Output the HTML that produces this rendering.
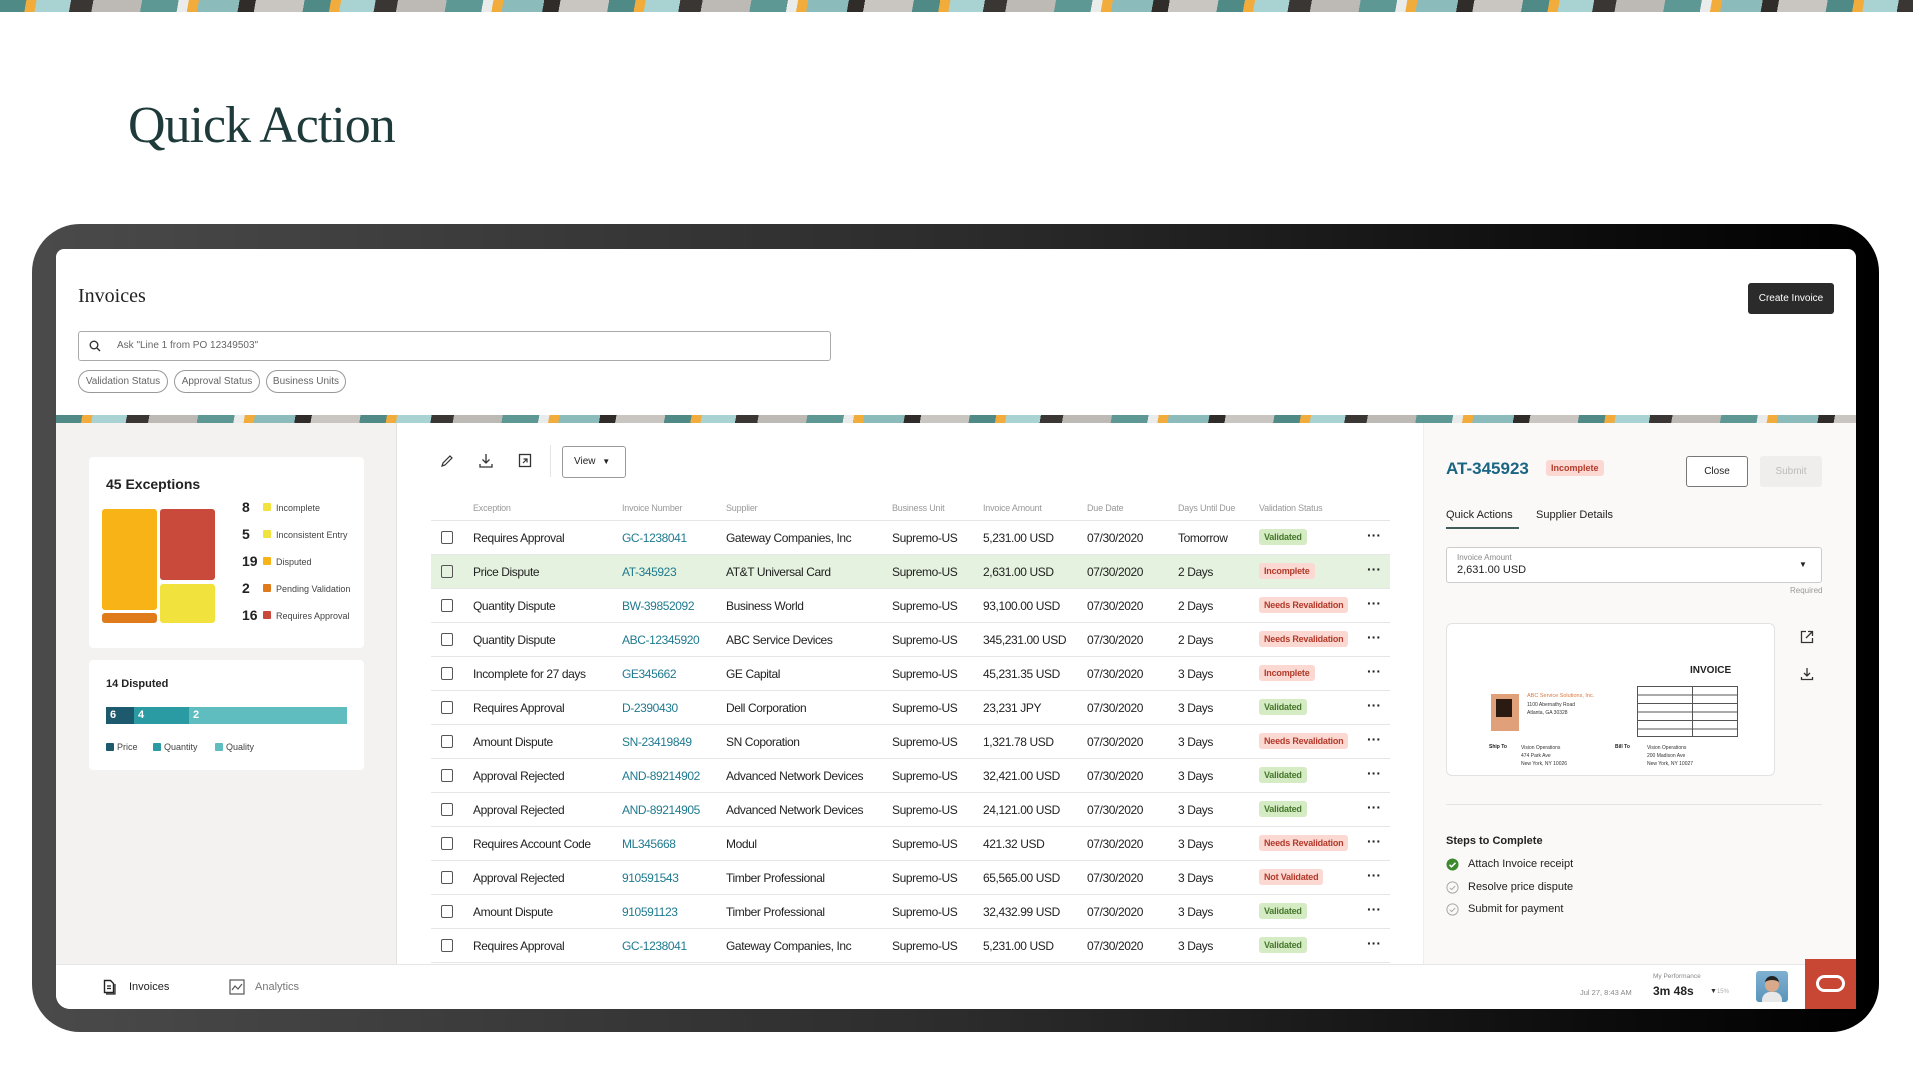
<!DOCTYPE html>
<html><head><meta charset="utf-8"><style>
*{margin:0;padding:0;box-sizing:border-box}
body{width:1913px;height:1077px;background:#fff;position:relative;overflow:hidden;font-family:"Liberation Sans",sans-serif;color:#222}
.a{position:absolute}
.strip{background:
 repeating-linear-gradient(100deg,#4f8a87 0 26px,#f2ac3c 26px 36px,#a9d2d3 36px 70px,#3a3633 70px 92px,#bdbab6 92px 140px,#5d9895 140px 176px,#e9eceb 176px 186px,#f2ac3c 186px 196px,#8bbcbb 196px 236px,#2f2c2a 236px 252px,#c9c6c1 252px 300px)}
.frame{left:32px;top:224px;width:1847px;height:808px;border-radius:48px;background:linear-gradient(90deg,#4a4a4a,#2c2c2c 50%,#0c0c0c 85%,#000)}
.screen{left:56px;top:249px;width:1800px;height:760px;background:#fff;border-radius:8px 8px 0 14px;overflow:hidden}
.chip{height:23px;border:1px solid #999;border-radius:12px;font-size:10px;color:#666;line-height:21px;text-align:center;top:121px}
.row{left:375px;width:959px;height:34px;border-bottom:1px solid #e6e6e6;font-size:12px;letter-spacing:-.4px}
.row span{position:absolute;top:10px;white-space:nowrap}
.cb{width:12px;height:13px;border:1.5px solid #555;border-radius:2px;left:10px;top:10px!important}
.lnk{color:#1f7a8f}
.b{font-size:9px;padding:3px 5px;border-radius:3px;top:8px!important;letter-spacing:-.2px;font-weight:bold}
.g{background:#d5ebc3;color:#46772c}
.r{background:#fbd8d2;color:#b23a2a}
.dots{font-weight:bold;font-size:14px;top:6px!important;letter-spacing:0}
.hd{font-size:9px;color:#999;letter-spacing:-.2px}
.lg{font-size:9px;color:#444}
.sw{width:8px;height:8px;border-radius:1px}
.num{font-size:14px;font-weight:bold}
</style></head><body>
<div class="a strip" style="left:0;top:0;width:1913px;height:12px"></div>
<div class="a" style="left:128px;top:96px;font-family:'Liberation Serif',serif;font-size:52px;color:#1f3a3a;letter-spacing:-1px">Quick Action</div>

<div class="a frame"></div>
<div class="a screen">
 <div class="a" style="left:22px;top:36px;font-family:'Liberation Serif',serif;font-size:20px;color:#222">Invoices</div>
 <div class="a" style="left:1692px;top:34px;width:86px;height:31px;background:#2b2b2b;border-radius:3px;color:#fff;font-size:10px;line-height:31px;text-align:center">Create Invoice</div>
 <div class="a" style="left:22px;top:82px;width:753px;height:30px;border:1.5px solid #aaa;border-radius:3px">
  <svg class="a" style="left:10px;top:8px" width="12" height="12" viewBox="0 0 12 12"><circle cx="5" cy="5" r="3.8" fill="none" stroke="#333" stroke-width="1.4"/><path d="M8 8l3 3" stroke="#333" stroke-width="1.4"/></svg>
  <div class="a" style="left:38px;top:8px;font-size:10px;color:#666">Ask "Line 1 from PO 12349503"</div>
 </div>
 <div class="a chip" style="left:22px;width:90px">Validation Status</div>
 <div class="a chip" style="left:118px;width:86px">Approval Status</div>
 <div class="a chip" style="left:210px;width:80px">Business Units</div>
 <div class="a strip" style="left:0;top:166px;width:1800px;height:8px"></div>

 <div class="a" style="left:0;top:174px;width:341px;height:541px;background:#f3f2f0;border-right:1px solid #e4e2de"></div>
 <div class="a" style="left:33px;top:208px;width:275px;height:191px;background:#fff;border-radius:4px"></div>
 <div class="a" style="left:50px;top:227px;font-size:14px;font-weight:bold">45 Exceptions</div>
 <div class="a" style="left:46px;top:260px;width:55px;height:101px;background:#f8b316;border-radius:3px"></div>
 <div class="a" style="left:46px;top:364px;width:55px;height:10px;background:#e07b1c;border-radius:3px"></div>
 <div class="a" style="left:104px;top:260px;width:55px;height:71px;background:#c94a3a;border-radius:3px"></div>
 <div class="a" style="left:104px;top:335px;width:55px;height:39px;background:#f1e23e;border-radius:3px"></div>
 <div class="a num" style="left:186px;top:250px">8</div><div class="a sw" style="left:207px;top:254px;background:#f1e23e"></div><div class="a lg" style="left:220px;top:254px">Incomplete</div>
 <div class="a num" style="left:186px;top:277px">5</div><div class="a sw" style="left:207px;top:281px;background:#f1e23e"></div><div class="a lg" style="left:220px;top:281px">Inconsistent Entry</div>
 <div class="a num" style="left:186px;top:304px">19</div><div class="a sw" style="left:207px;top:308px;background:#f8b316"></div><div class="a lg" style="left:220px;top:308px">Disputed</div>
 <div class="a num" style="left:186px;top:331px">2</div><div class="a sw" style="left:207px;top:335px;background:#e07b1c"></div><div class="a lg" style="left:220px;top:335px">Pending Validation</div>
 <div class="a num" style="left:186px;top:358px">16</div><div class="a sw" style="left:207px;top:362px;background:#c94a3a"></div><div class="a lg" style="left:220px;top:362px">Requires Approval</div>

 <div class="a" style="left:33px;top:411px;width:275px;height:110px;background:#fff;border-radius:4px"></div>
 <div class="a" style="left:50px;top:429px;font-size:11px;font-weight:bold">14 Disputed</div>
 <div class="a" style="left:50px;top:458px;width:28px;height:17px;background:#1e5a6e;color:#fff;font-size:11px;font-weight:bold;padding:2px 4px">6</div>
 <div class="a" style="left:78px;top:458px;width:55px;height:17px;background:#2a9aa3;color:#fff;font-size:11px;font-weight:bold;padding:2px 4px">4</div>
 <div class="a" style="left:133px;top:458px;width:158px;height:17px;background:#5fbcbf;color:#fff;font-size:11px;font-weight:bold;padding:2px 4px">2</div>
 <div class="a sw" style="left:50px;top:494px;background:#1e5a6e"></div><div class="a lg" style="left:61px;top:493px">Price</div>
 <div class="a sw" style="left:97px;top:494px;background:#2a9aa3"></div><div class="a lg" style="left:108px;top:493px">Quantity</div>
 <div class="a sw" style="left:159px;top:494px;background:#5fbcbf"></div><div class="a lg" style="left:170px;top:493px">Quality</div>

 <svg class="a" style="left:384px;top:205px" width="14" height="14" viewBox="0 0 14 14"><path d="M2 12l1-3 7-7 2 2-7 7z" fill="none" stroke="#333" stroke-width="1.2"/></svg>
 <svg class="a" style="left:423px;top:204px" width="14" height="15" viewBox="0 0 14 15"><path d="M7 1v9M3.5 6.5L7 10l3.5-3.5M1 11v3h12v-3" fill="none" stroke="#333" stroke-width="1.3"/></svg>
 <svg class="a" style="left:462px;top:204px" width="14" height="15" viewBox="0 0 14 15"><rect x="1.5" y="1.5" width="11" height="12" fill="none" stroke="#333" stroke-width="1.3"/><path d="M5 10l4-4M5.5 6H9v3.5" fill="none" stroke="#333" stroke-width="1.2"/></svg>
 <div class="a" style="left:494px;top:196px;width:1px;height:32px;background:#e4e4e4"></div>
 <div class="a" style="left:506px;top:197px;width:64px;height:32px;border:1px solid #999;border-radius:3px;font-size:10px;line-height:30px;padding-left:11px">View <span style="font-size:8px;margin-left:4px">▼</span></div>

 <div class="a hd" style="left:417px;top:254px">Exception</div>
 <div class="a hd" style="left:566px;top:254px">Invoice Number</div>
 <div class="a hd" style="left:670px;top:254px">Supplier</div>
 <div class="a hd" style="left:836px;top:254px">Business Unit</div>
 <div class="a hd" style="left:927px;top:254px">Invoice Amount</div>
 <div class="a hd" style="left:1031px;top:254px">Due Date</div>
 <div class="a hd" style="left:1122px;top:254px">Days Until Due</div>
 <div class="a hd" style="left:1203px;top:254px">Validation Status</div>
 <div class="a" style="left:375px;top:271px;width:959px;height:1px;background:#e6e6e6"></div>

 <div class="a row" style="top:272px"><span class="cb"></span><span style="left:42px">Requires Approval</span><span class="lnk" style="left:191px">GC-1238041</span><span style="left:295px">Gateway Companies, Inc</span><span style="left:461px">Supremo-US</span><span style="left:552px">5,231.00 USD</span><span style="left:656px">07/30/2020</span><span style="left:747px">Tomorrow</span><span class="b g" style="left:828px">Validated</span><span class="dots" style="left:936px">···</span></div>
 <div class="a row" style="top:306px;background:#e5f2df"><span class="cb"></span><span style="left:42px">Price Dispute</span><span class="lnk" style="left:191px">AT-345923</span><span style="left:295px">AT&amp;T Universal Card</span><span style="left:461px">Supremo-US</span><span style="left:552px">2,631.00 USD</span><span style="left:656px">07/30/2020</span><span style="left:747px">2 Days</span><span class="b r" style="left:828px">Incomplete</span><span class="dots" style="left:936px">···</span></div>
 <div class="a row" style="top:340px"><span class="cb"></span><span style="left:42px">Quantity Dispute</span><span class="lnk" style="left:191px">BW-39852092</span><span style="left:295px">Business World</span><span style="left:461px">Supremo-US</span><span style="left:552px">93,100.00 USD</span><span style="left:656px">07/30/2020</span><span style="left:747px">2 Days</span><span class="b r" style="left:828px">Needs Revalidation</span><span class="dots" style="left:936px">···</span></div>
 <div class="a row" style="top:374px"><span class="cb"></span><span style="left:42px">Quantity Dispute</span><span class="lnk" style="left:191px">ABC-12345920</span><span style="left:295px">ABC Service Devices</span><span style="left:461px">Supremo-US</span><span style="left:552px">345,231.00 USD</span><span style="left:656px">07/30/2020</span><span style="left:747px">2 Days</span><span class="b r" style="left:828px">Needs Revalidation</span><span class="dots" style="left:936px">···</span></div>
 <div class="a row" style="top:408px"><span class="cb"></span><span style="left:42px">Incomplete for 27 days</span><span class="lnk" style="left:191px">GE345662</span><span style="left:295px">GE Capital</span><span style="left:461px">Supremo-US</span><span style="left:552px">45,231.35 USD</span><span style="left:656px">07/30/2020</span><span style="left:747px">3 Days</span><span class="b r" style="left:828px">Incomplete</span><span class="dots" style="left:936px">···</span></div>
 <div class="a row" style="top:442px"><span class="cb"></span><span style="left:42px">Requires Approval</span><span class="lnk" style="left:191px">D-2390430</span><span style="left:295px">Dell Corporation</span><span style="left:461px">Supremo-US</span><span style="left:552px">23,231 JPY</span><span style="left:656px">07/30/2020</span><span style="left:747px">3 Days</span><span class="b g" style="left:828px">Validated</span><span class="dots" style="left:936px">···</span></div>
 <div class="a row" style="top:476px"><span class="cb"></span><span style="left:42px">Amount Dispute</span><span class="lnk" style="left:191px">SN-23419849</span><span style="left:295px">SN Coporation</span><span style="left:461px">Supremo-US</span><span style="left:552px">1,321.78 USD</span><span style="left:656px">07/30/2020</span><span style="left:747px">3 Days</span><span class="b r" style="left:828px">Needs Revalidation</span><span class="dots" style="left:936px">···</span></div>
 <div class="a row" style="top:510px"><span class="cb"></span><span style="left:42px">Approval Rejected</span><span class="lnk" style="left:191px">AND-89214902</span><span style="left:295px">Advanced Network Devices</span><span style="left:461px">Supremo-US</span><span style="left:552px">32,421.00 USD</span><span style="left:656px">07/30/2020</span><span style="left:747px">3 Days</span><span class="b g" style="left:828px">Validated</span><span class="dots" style="left:936px">···</span></div>
 <div class="a row" style="top:544px"><span class="cb"></span><span style="left:42px">Approval Rejected</span><span class="lnk" style="left:191px">AND-89214905</span><span style="left:295px">Advanced Network Devices</span><span style="left:461px">Supremo-US</span><span style="left:552px">24,121.00 USD</span><span style="left:656px">07/30/2020</span><span style="left:747px">3 Days</span><span class="b g" style="left:828px">Validated</span><span class="dots" style="left:936px">···</span></div>
 <div class="a row" style="top:578px"><span class="cb"></span><span style="left:42px">Requires Account Code</span><span class="lnk" style="left:191px">ML345668</span><span style="left:295px">Modul</span><span style="left:461px">Supremo-US</span><span style="left:552px">421.32 USD</span><span style="left:656px">07/30/2020</span><span style="left:747px">3 Days</span><span class="b r" style="left:828px">Needs Revalidation</span><span class="dots" style="left:936px">···</span></div>
 <div class="a row" style="top:612px"><span class="cb"></span><span style="left:42px">Approval Rejected</span><span class="lnk" style="left:191px">910591543</span><span style="left:295px">Timber Professional</span><span style="left:461px">Supremo-US</span><span style="left:552px">65,565.00 USD</span><span style="left:656px">07/30/2020</span><span style="left:747px">3 Days</span><span class="b r" style="left:828px">Not Validated</span><span class="dots" style="left:936px">···</span></div>
 <div class="a row" style="top:646px"><span class="cb"></span><span style="left:42px">Amount Dispute</span><span class="lnk" style="left:191px">910591123</span><span style="left:295px">Timber Professional</span><span style="left:461px">Supremo-US</span><span style="left:552px">32,432.99 USD</span><span style="left:656px">07/30/2020</span><span style="left:747px">3 Days</span><span class="b g" style="left:828px">Validated</span><span class="dots" style="left:936px">···</span></div>
 <div class="a row" style="top:680px"><span class="cb"></span><span style="left:42px">Requires Approval</span><span class="lnk" style="left:191px">GC-1238041</span><span style="left:295px">Gateway Companies, Inc</span><span style="left:461px">Supremo-US</span><span style="left:552px">5,231.00 USD</span><span style="left:656px">07/30/2020</span><span style="left:747px">3 Days</span><span class="b g" style="left:828px">Validated</span><span class="dots" style="left:936px">···</span></div>

 <div class="a" style="left:1367px;top:174px;width:433px;height:541px;background:#faf9f8;border-left:1px solid #eee"></div>
 <div class="a" style="left:1390px;top:210px;font-size:17px;font-weight:bold;color:#1b6584">AT-345923</div>
 <div class="a" style="left:1490px;top:211px;background:#fbd8d2;color:#b23a2a;font-size:9px;padding:3px 5px;border-radius:3px;font-weight:bold">Incomplete</div>
 <div class="a" style="left:1630px;top:207px;width:62px;height:31px;border:1px solid #777;border-radius:3px;background:#fff;font-size:10px;line-height:29px;text-align:center">Close</div>
 <div class="a" style="left:1704px;top:207px;width:62px;height:31px;background:#efeeec;border-radius:3px;font-size:10px;line-height:31px;text-align:center;color:#bbb">Submit</div>
 <div class="a" style="left:1390px;top:260px;font-size:11px">Quick Actions</div>
 <div class="a" style="left:1390px;top:278px;width:73px;height:2px;background:#3f5c5a"></div>
 <div class="a" style="left:1480px;top:260px;font-size:11px">Supplier Details</div>
 <div class="a" style="left:1390px;top:298px;width:376px;height:36px;border:1px solid #ccc;border-radius:3px;background:#fff">
  <div class="a" style="left:10px;top:5px;font-size:8px;color:#888">Invoice Amount</div>
  <div class="a" style="left:10px;top:16px;font-size:11px">2,631.00 USD</div>
  <div class="a" style="left:352px;top:12px;font-size:8px">▼</div>
 </div>
 <div class="a" style="left:1734px;top:337px;font-size:8px;color:#999">Required</div>
 <div class="a" style="left:1390px;top:374px;width:329px;height:153px;border:1px solid #e2e2e2;border-radius:6px;background:#fff">
  <div class="a" style="left:243px;top:41px;font-size:10px;font-weight:bold">INVOICE</div>
  <div class="a" style="left:190px;top:62px;width:101px;height:51px;border:1px solid #555;background:repeating-linear-gradient(#fff 0 7.5px,#555 7.5px 8.5px)"></div>
  <div class="a" style="left:245px;top:62px;width:1px;height:51px;background:#555"></div>
  <div class="a" style="left:44px;top:70px;width:28px;height:37px;background:#e0a07a"><div class="a" style="left:5px;top:5px;width:16px;height:18px;background:#2a1a12"></div></div>
  <div class="a" style="left:80px;top:69px;font-size:5.5px;color:#d9773b">ABC Service Solutions, Inc.</div>
  <div class="a" style="left:80px;top:77px;font-size:5px;line-height:8px;color:#333">1100 Abernathy Road<br>Atlanta, GA 30328</div>
  <div class="a" style="left:42px;top:120px;font-size:5px;font-weight:bold">Ship To</div>
  <div class="a" style="left:74px;top:120px;font-size:5px;line-height:8px;color:#333">Vision Operations<br>474 Park Ave<br>New York, NY 10026</div>
  <div class="a" style="left:168px;top:120px;font-size:5px;font-weight:bold">Bill To</div>
  <div class="a" style="left:200px;top:120px;font-size:5px;line-height:8px;color:#333">Vision Operations<br>200 Madison Ave<br>New York, NY 10027</div>
 </div>
 <svg class="a" style="left:1744px;top:381px" width="14" height="14" viewBox="0 0 14 14"><path d="M6 1.5H1.5v11h11V8M8 1.5h4.5V6M12.5 1.5L6 8" fill="none" stroke="#333" stroke-width="1.3"/></svg>
 <svg class="a" style="left:1744px;top:418px" width="14" height="14" viewBox="0 0 14 14"><path d="M7 1v8M4 6l3 3 3-3M1.5 10v2.5h11V10" fill="none" stroke="#333" stroke-width="1.3"/></svg>
 <div class="a" style="left:1390px;top:555px;width:376px;height:1px;background:#e4e4e4"></div>
 <div class="a" style="left:1390px;top:586px;font-size:11px;font-weight:bold">Steps to Complete</div>
 <svg class="a" style="left:1390px;top:609px" width="13" height="13" viewBox="0 0 13 13"><circle cx="6.5" cy="6.5" r="6" fill="#3d8a2e"/><path d="M3.5 6.8l2 2 4-4" fill="none" stroke="#fff" stroke-width="1.5"/></svg>
 <div class="a" style="left:1412px;top:609px;font-size:11px">Attach Invoice receipt</div>
 <svg class="a" style="left:1390px;top:632px" width="13" height="13" viewBox="0 0 13 13"><circle cx="6.5" cy="6.5" r="5.6" fill="none" stroke="#aaa"/><path d="M3.8 6.8l1.8 1.8 3.6-3.6" fill="none" stroke="#aaa" stroke-width="1"/></svg>
 <div class="a" style="left:1412px;top:632px;font-size:11px">Resolve price dispute</div>
 <svg class="a" style="left:1390px;top:654px" width="13" height="13" viewBox="0 0 13 13"><circle cx="6.5" cy="6.5" r="5.6" fill="none" stroke="#aaa"/><path d="M3.8 6.8l1.8 1.8 3.6-3.6" fill="none" stroke="#aaa" stroke-width="1"/></svg>
 <div class="a" style="left:1412px;top:654px;font-size:11px">Submit for payment</div>

 <div class="a" style="left:0;top:715px;width:1800px;height:45px;background:#fff;border-top:1px solid #e6e6e6"></div>
 <svg class="a" style="left:47px;top:730px" width="13" height="16" viewBox="0 0 13 16"><path d="M1.5 1.5h6l3 3v9h-9z" fill="none" stroke="#222" stroke-width="1.4"/><path d="M4 7h4M4 9.5h4" stroke="#222" stroke-width="1.2"/><path d="M3 15h9V5" fill="none" stroke="#222" stroke-width="1.2"/></svg>
 <div class="a" style="left:73px;top:732px;font-size:11px">Invoices</div>
 <svg class="a" style="left:173px;top:730px" width="16" height="16" viewBox="0 0 16 16"><rect x="1" y="1" width="14" height="14" fill="none" stroke="#555" stroke-width="1.2"/><path d="M3 11l3-4 3 3 4-5" fill="none" stroke="#555" stroke-width="1.2"/></svg>
 <div class="a" style="left:199px;top:732px;font-size:11px;color:#777">Analytics</div>
 <div class="a" style="left:1524px;top:739px;font-size:7.5px;color:#888">Jul 27, 8:43 AM</div>
 <div class="a" style="left:1597px;top:724px;font-size:6.5px;color:#888">My Performance</div>
 <div class="a" style="left:1597px;top:735px;font-size:12px;font-weight:bold">3m 48s</div>
 <div class="a" style="left:1654px;top:739px;font-size:7px;color:#333">▼<span style="color:#aaa;font-size:6px">15%</span></div>
 <div class="a" style="left:1700px;top:722px;width:32px;height:31px;border-radius:3px;background:linear-gradient(#7fb0d0,#5a95bb)"><div class="a" style="left:9px;top:5px;width:14px;height:16px;border-radius:7px;background:#d8a98a;border-top:4px solid #222"></div><div class="a" style="left:6px;top:21px;width:20px;height:10px;background:#e8e8e8;border-radius:8px 8px 0 0"></div></div>
 <div class="a" style="left:1749px;top:710px;width:51px;height:50px;background:#c74634"><div class="a" style="left:11px;top:16px;width:29px;height:17px;border:3px solid #fff;border-radius:9px"></div></div>
</div>
</body></html>
